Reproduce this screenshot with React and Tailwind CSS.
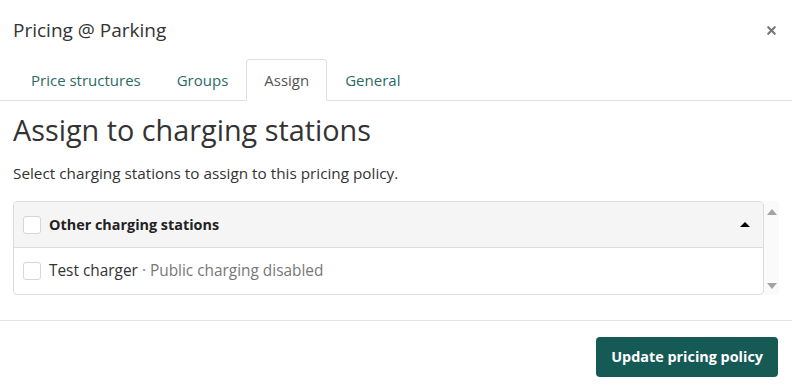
import { X } from 'lucide-react';

const tabs = ['Price structures', 'Groups', 'Assign', 'General'];

function Checkbox() {
    return <span className="block h-[18px] w-[18px] shrink-0 rounded-[3px] border border-[#d6d6d6] bg-white" />;
}

export default function App() {
    return (
        <div className="flex h-[390px] w-[792px] flex-col bg-white text-[#333] font-['Open_Sans',sans-serif]">
            {/* Header */}
            <div className="flex h-[59px] items-center justify-between pl-[13px] pr-[14px] pt-[2px]">
                <h1 className="text-[19px] text-[#333]">Pricing @ Parking</h1>
                <X className="h-[13px] w-[13px] text-[#777]" strokeWidth={4} />
            </div>

            {/* Tabs */}
            <div className="flex h-[42px] items-end border-b border-[#dde1e6] pl-[13px]">
                {tabs.map((t) => (
                    <div
                        key={t}
                        className={`-mb-px flex h-[42px] items-center rounded-t-[4px] border px-[17px] text-[15px] ${
                            t === 'Assign'
                                ? 'border-[#dde1e6] border-b-white bg-white text-[#555]'
                                : 'border-transparent text-[#2b6b66]'
                        }`}
                    >
                        {t}
                    </div>
                ))}
            </div>

            {/* Content */}
            <div className="px-[13px]">
                <h2 className="mt-[12px] text-[28.8px] leading-[34px] font-normal text-[#333]">Assign to charging stations</h2>
                <p className="mt-[16px] text-[15.3px] leading-[20px] text-[#333]">
                    Select charging stations to assign to this pricing policy.
                </p>

                <div className="mt-[18px] flex">
                    <div className="flex-1 overflow-hidden rounded-[4px] border border-[#dcdcdc]">
                        <div className="flex h-[46px] items-center gap-[8px] border-b border-[#dcdcdc] bg-[#f5f5f5] pl-[9px] pr-[13px]">
                            <Checkbox />
                            <span className="flex-1 text-[14.4px] font-bold text-[#222]">Other charging stations</span>
                            <span className="h-0 w-0 border-x-[5px] border-b-[5px] border-x-transparent border-b-black" />
                        </div>
                        <div className="flex h-[46px] items-center gap-[8px] pl-[9px]">
                            <Checkbox />
                            <span className="text-[15.4px] text-[#333]">
                                Test charger <span className="text-[#777]">· Public charging disabled</span>
                            </span>
                        </div>
                    </div>
                    <div className="flex w-[15px] flex-col items-center justify-between bg-[#fafafa] pt-[8px] pb-[6px]">
                        <span className="h-0 w-0 border-x-[5px] border-b-[6px] border-x-transparent border-b-[#a3a3a3]" />
                        <span className="h-0 w-0 border-x-[5px] border-t-[6px] border-x-transparent border-t-[#a3a3a3]" />
                    </div>
                </div>
            </div>

            {/* Footer */}
            <div className="mt-[25px] flex justify-end border-t border-[#e3e3e3] pt-[16px] pr-[14px]">
                <button className="h-[40px] rounded-[4px] bg-[#165a55] px-[15px] text-[14.4px] font-bold text-white">
                    Update pricing policy
                </button>
            </div>
        </div>
    );
}
